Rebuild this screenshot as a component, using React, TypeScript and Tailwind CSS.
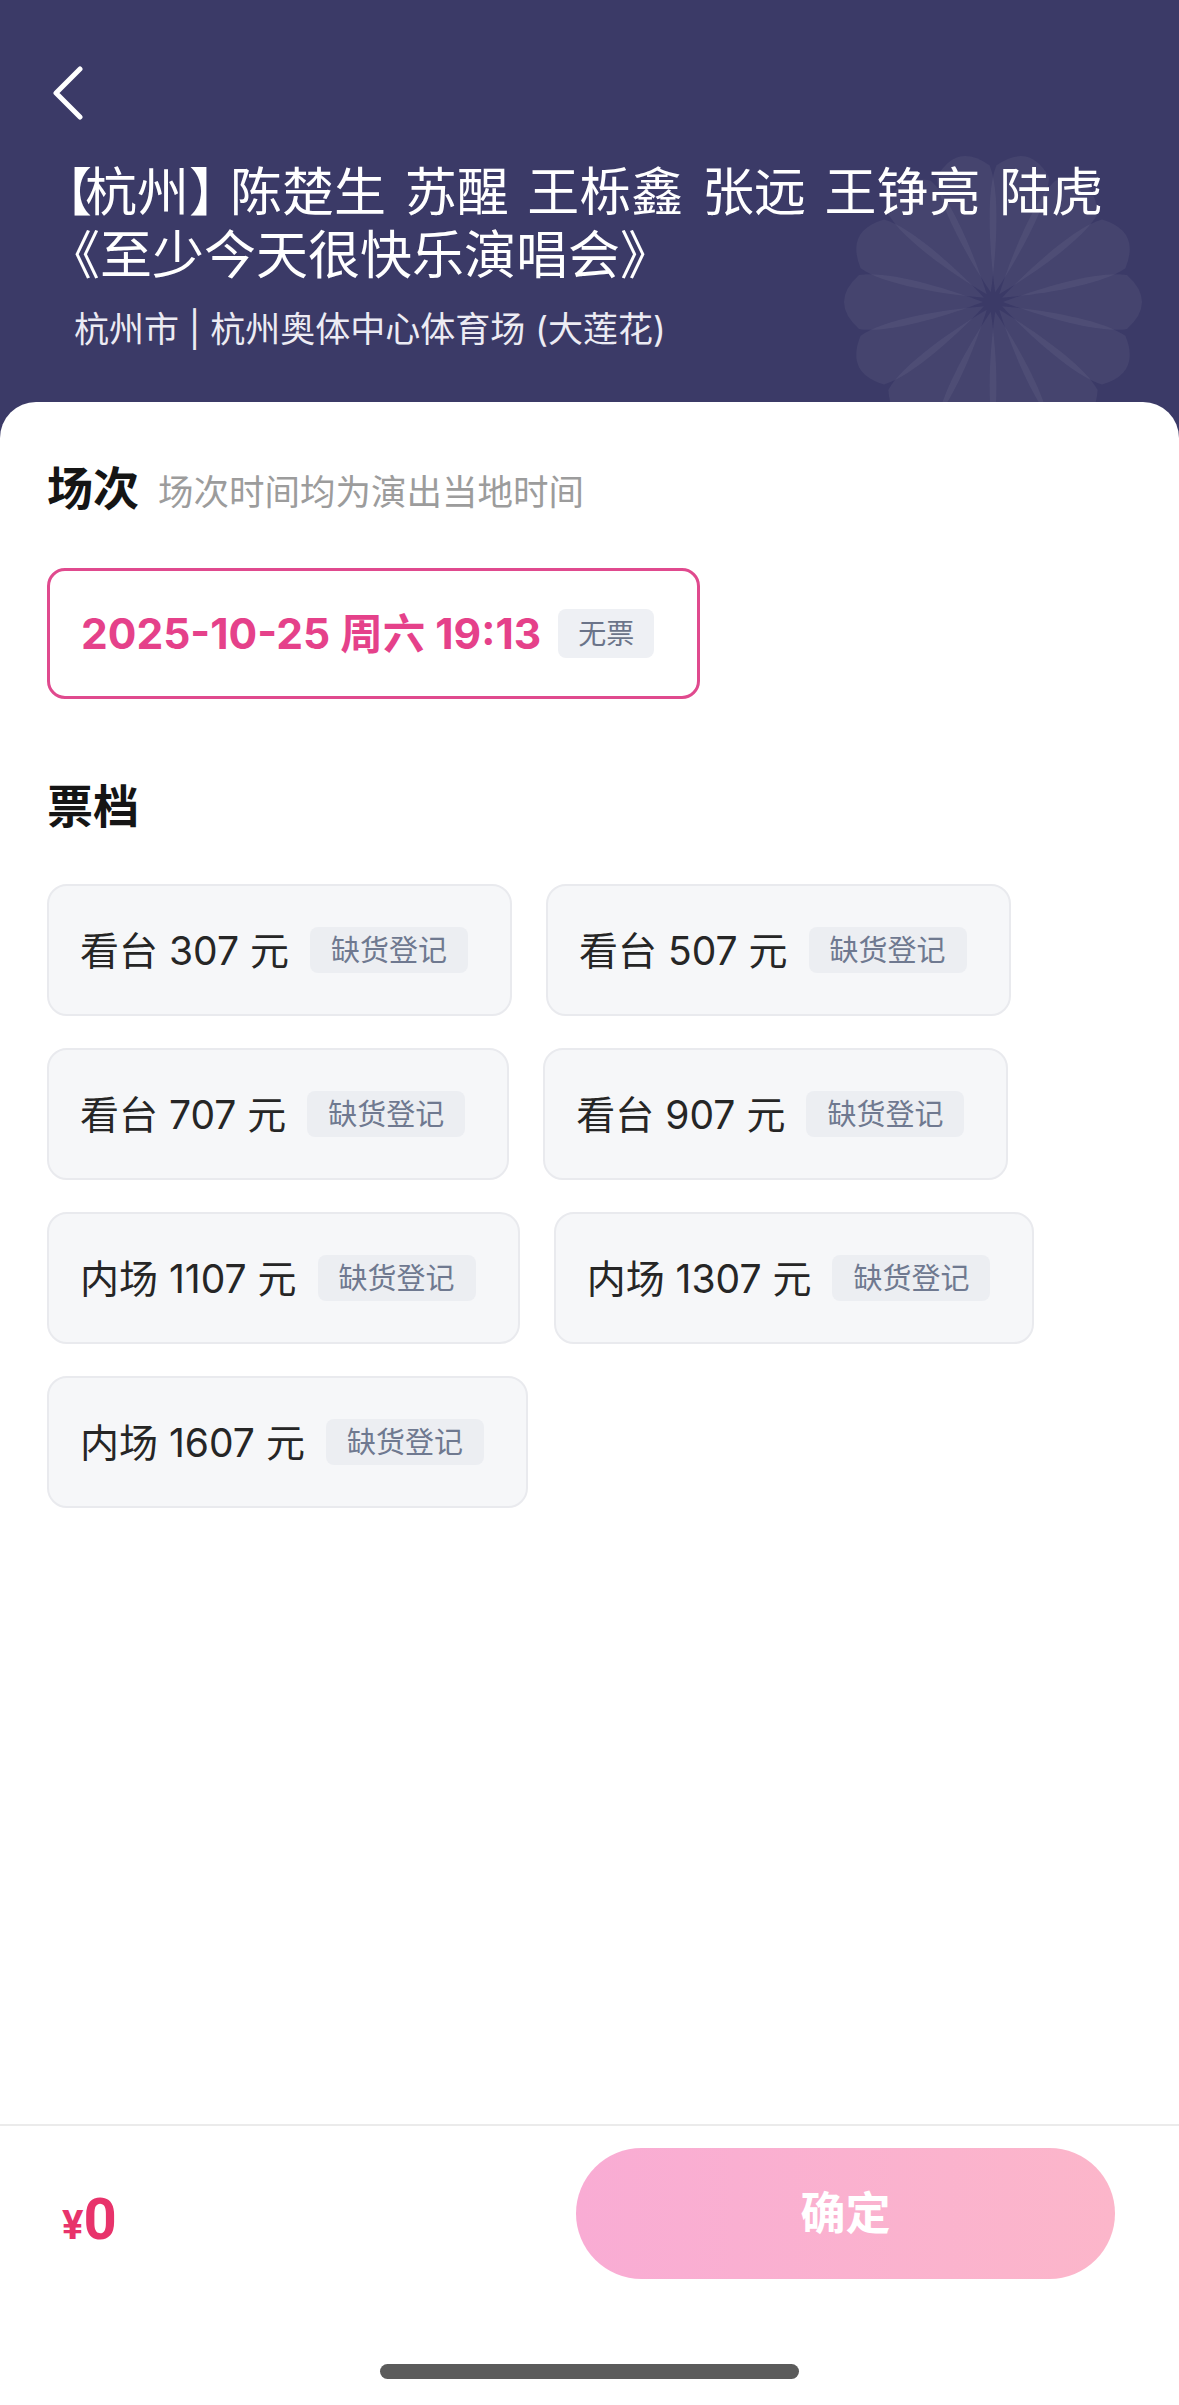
import React from 'react';

const tickets = [
  { area: '看台', price: 307 },
  { area: '看台', price: 507 },
  { area: '看台', price: 707 },
  { area: '看台', price: 907 },
  { area: '内场', price: 1107 },
  { area: '内场', price: 1307 },
  { area: '内场', price: 1607 },
];

// faded stadium logo behind the header text
const Flower: React.FC = () => (
  <svg
    width="320"
    height="320"
    viewBox="-160 -160 320 320"
    className="pointer-events-none absolute left-[833px] top-[142px]"
  >
    {Array.from({ length: 14 }).map((_, i) => (
      <path
        key={i}
        d="M0 -10 C -14 -46 -32 -106 -27 -134 Q 0 -164 27 -134 C 32 -106 14 -46 0 -10 Z"
        transform={`rotate(${i * (360 / 14) + 12.86})`}
        fill="#ffffff"
        fillOpacity="0.05"
      />
    ))}
  </svg>
);

const BackIcon: React.FC = () => (
  <svg width="32" height="54" viewBox="0 0 32 54" fill="none">
    <path d="M28 3 L4 27 L28 51" stroke="#ffffff" strokeWidth="5" strokeLinecap="round" strokeLinejoin="round" />
  </svg>
);

const TicketCard: React.FC<{ area: string; price: number }> = ({ area, price }) => (
  <div className="flex h-[132px] items-center rounded-[20px] border-2 border-[#e9eaee] bg-[#f6f7f9] pl-[31px] pr-[42px]">
    <span className="text-[39px] leading-none text-[#262626]">
      {area} {price} 元
    </span>
    <span className="ml-[21px] flex h-[46px] items-center rounded-[8px] bg-[#eceef2] px-[21px] text-[29px] text-[#6f7990]">
      缺货登记
    </span>
  </div>
);

export default function App() {
  return (
    <div className="flex h-[2405px] w-[1179px] flex-col overflow-hidden bg-[#3b3a67] font-['Inter','Noto_Sans_CJK_SC',sans-serif]">
      <header className="relative h-[402px] shrink-0 overflow-hidden">
        <Flower />
        <div className="relative px-[48px] pt-[66px]">
          <button className="ml-[4px] block">
            <BackIcon />
          </button>
          <h1 className="mt-[41px] text-[52px] leading-[63px] text-white">
            <span className="block whitespace-nowrap [word-spacing:4px]">
              <span className="-ml-[8px] tracking-[-7px]">【</span>杭州<span className="tracking-[-11px]">】</span>陈楚生 苏醒 王栎鑫 张远 王铮亮 陆虎
            </span>
            <span className="block whitespace-nowrap">《至少今天很快乐演唱会》</span>
          </h1>
          <p className="ml-[26px] mt-[22px] text-[35px] leading-[40px] text-[#ecebf3]">
            杭州市 | 杭州奥体中心体育场 (大莲花)
          </p>
        </div>
      </header>

      <main className="flex flex-1 flex-col rounded-t-[36px] bg-white">
        <div className="px-[47px] pt-[58px]">
          <div className="flex items-baseline">
            <h2 className="text-[46px] font-bold leading-[56px] text-[#151515]">场次</h2>
            <span className="ml-[19px] text-[35.5px] text-[#9c9c9c]">场次时间均为演出当地时间</span>
          </div>

          <div className="mt-[49px] inline-flex h-[131px] items-center rounded-[18px] border-[3px] border-[#e04a8e] pl-[31px] pr-[43px]">
            <span className="text-[42.5px] font-bold leading-none text-[#e5418a]">2025-10-25 周六 19:13</span>
            <span className="ml-[17px] flex h-[49px] items-center rounded-[8px] bg-[#eef0f4] px-[20px] text-[28px] text-[#6b7489]">
              无票
            </span>
          </div>

          <h2 className="mt-[79px] text-[46px] font-bold leading-[56px] text-[#151515]">票档</h2>

          <div className="mt-[50px] flex flex-wrap gap-x-[34px] gap-y-[32px]">
            {tickets.map((t) => (
              <TicketCard key={t.price} area={t.area} price={t.price} />
            ))}
          </div>
        </div>

        <footer className="mt-auto border-t-2 border-[#ebebeb]">
          <div className="mt-[22px] flex h-[131px] items-center pl-[62px] pr-[64px]">
            <div className="mt-[10px] flex items-baseline font-['Roboto',sans-serif] font-bold text-[#e8336b]">
              <span className="text-[40px] leading-none">¥</span>
              <span className="text-[58px] leading-none">0</span>
            </div>
            <button className="ml-auto flex h-[131px] w-[539px] items-center justify-center rounded-full bg-linear-to-r from-[#f9acd4] to-[#fcb6ca] text-[45px] font-bold text-white">
              确定
            </button>
          </div>
          <div className="mx-auto mb-[26px] mt-[85px] h-[15px] w-[419px] rounded-full bg-[#5b5b5b]" />
        </footer>
      </main>
    </div>
  );
}
